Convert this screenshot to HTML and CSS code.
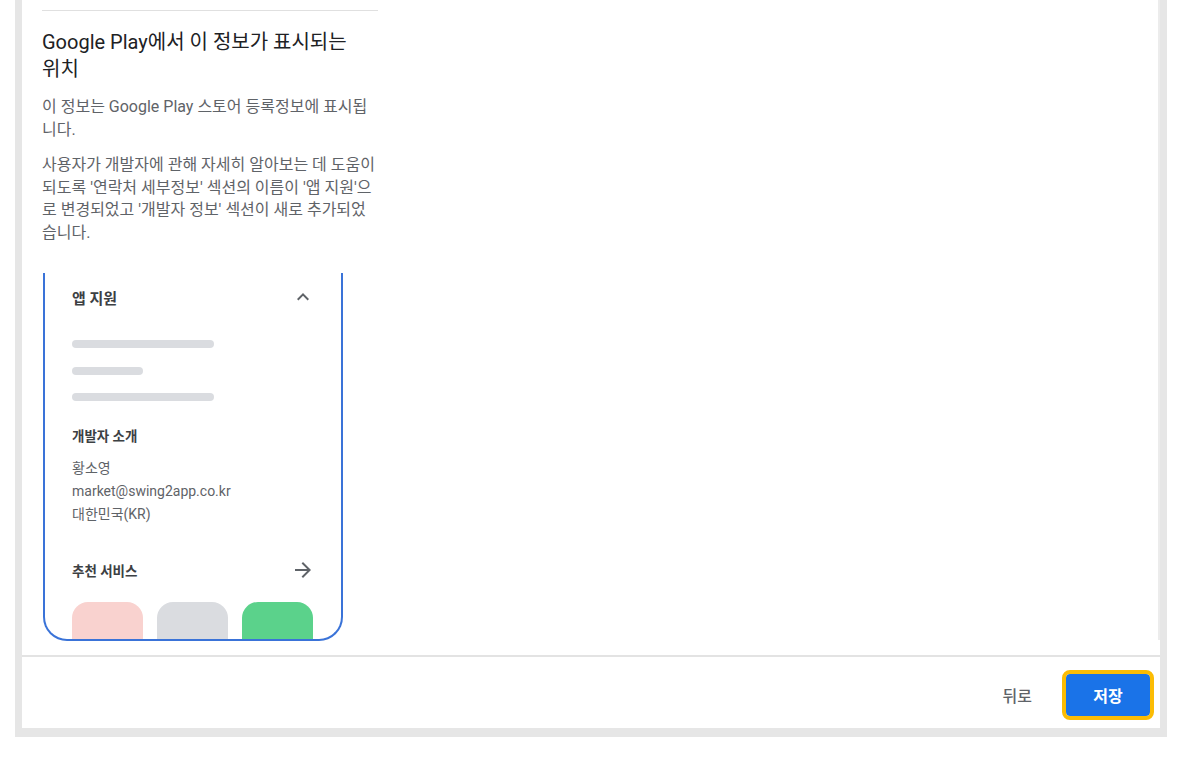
FILE: index.html
```html
<!DOCTYPE html>
<html lang="ko">
<head>
<meta charset="utf-8">
<title>Google Play 정보 표시 위치</title>
<link rel="stylesheet" href="styles.css">
</head>
<body>
<div class="frame">
  <div class="panel">
    <div class="scroll">
      <div class="col">
        <div class="divider"></div>
        <h2 class="title">Google Play에서 이 정보가 표시되는 위치</h2>
        <p class="desc">이 정보는 Google Play 스토어 등록정보에 표시됩니다.</p>
        <p class="desc">사용자가 개발자에 관해 자세히 알아보는 데 도움이 되도록 '연락처 세부정보' 섹션의 이름이 '앱 지원'으로 변경되었고 '개발자 정보' 섹션이 새로 추가되었습니다.</p>
        <div class="phone">
          <div class="row head-row">
            <span class="sec-title">앱 지원</span>
            <svg class="icon" viewBox="0 0 24 24" width="24" height="24"><path d="M12 8l-6 6 1.41 1.41L12 10.83l4.59 4.58L18 14z"/></svg>
          </div>
          <div class="bars">
            <div class="bar long"></div>
            <div class="bar short"></div>
            <div class="bar long"></div>
          </div>
          <div class="dev-title">개발자 소개</div>
          <div class="dev-info">
            <div>황소영</div>
            <div>market@swing2app.co.kr</div>
            <div>대한민국(KR)</div>
          </div>
          <div class="row rec-row">
            <span class="rec-title">추천 서비스</span>
            <svg class="icon arrow" viewBox="0 0 24 24" width="24" height="24"><path d="M12 4l-1.41 1.41L16.17 11H4v2h12.17l-5.58 5.59L12 20l8-8z"/></svg>
          </div>
          <div class="tiles">
            <div class="tile pink"></div>
            <div class="tile grey"></div>
            <div class="tile green"></div>
          </div>
        </div>
      </div>
      <div class="scrollbar"></div>
    </div>
    <div class="footer">
      <button class="btn-back">뒤로</button>
      <button class="btn-save">저장</button>
    </div>
  </div>
</div>
</body>
</html>
```
FILE: styles.css
```css
html, body {
  margin: 0;
  padding: 0;
  background: #ffffff;
}
body {
  font-family: Roboto, "Noto Sans CJK KR", sans-serif;
  color: #202124;
}
.frame {
  margin-left: 15px;
  width: 1152px;
  height: 737px;
  background: #e6e6e6;
  padding: 0 7px 9px 7px;
  box-sizing: border-box;
}
.panel {
  height: 100%;
  background: #ffffff;
  display: flex;
  flex-direction: column;
}
.scroll {
  position: relative;
  height: 657px;
  overflow: hidden;
  padding-left: 20px;
  border-bottom: 2px solid #e3e3e3;
  box-sizing: border-box;
  flex: none;
}
.scrollbar {
  position: absolute;
  right: 0;
  top: 0;
  width: 2px;
  height: 640px;
  background: #ececec;
}
.col {
  width: 336px;
  padding-top: 10px;
}
.divider {
  height: 1px;
  background: #e0e0e0;
}
.title {
  margin: 18px 0 13px;
  font-size: 20px;
  line-height: 27px;
  font-weight: 400;
  word-break: keep-all;
  color: #202124;
}
.desc {
  margin: 0 0 13px;
  font-size: 16px;
  line-height: 22.5px;
  color: #5f6368;
}
.phone {
  margin-top: 29px;
  margin-left: 1px;
  width: 300px;
  height: 368px;
  border: 2px solid #3a73d8;
  border-top: none;
  border-radius: 0 0 24px 24px;
  box-sizing: border-box;
  padding: 0 26px 0 27px;
  overflow: hidden;
}
.row {
  display: flex;
  align-items: center;
  justify-content: space-between;
}
.icon {
  fill: #5f6368;
  flex: none;
}
.head-row {
  height: 24px;
  margin-top: 12px;
}
.sec-title {
  font-size: 15px;
  font-weight: 700;
  color: #3c4043;
}
.bars {
  margin-top: 31px;
  display: flex;
  flex-direction: column;
  gap: 18.5px;
}
.bar {
  height: 8px;
  border-radius: 4px;
  background: #dadce0;
}
.bar.long { width: 142px; }
.bar.short { width: 71px; }
.dev-title {
  margin-top: 27px;
  font-size: 13.5px;
  line-height: 16px;
  font-weight: 700;
  color: #3c4043;
}
.dev-info {
  margin-top: 13px;
  font-size: 14px;
  line-height: 23px;
  color: #5f6368;
}
.rec-row {
  height: 24px;
  margin-top: 32px;
}
.rec-title {
  font-size: 13.5px;
  font-weight: 700;
  color: #3c4043;
}
.tiles {
  margin-top: 20px;
  display: flex;
  gap: 14px;
}
.tile {
  width: 71px;
  height: 60px;
  border-radius: 16px 16px 0 0;
}
.tile.pink { background: #f9d2cf; }
.tile.grey { background: #dadce0; }
.tile.green { background: #5bd28b; }
.footer {
  flex: 1;
  display: flex;
  justify-content: flex-end;
  align-items: flex-start;
  padding: 17px 10px 0 0;
}
.btn-back {
  font-family: Roboto, "Noto Sans CJK KR", sans-serif;
  font-size: 16px;
  font-weight: 500;
  color: #5f6368;
  background: none;
  border: none;
  height: 42px;
  padding: 0 16px;
  margin-right: 18px;
}
.btn-save {
  font-family: Roboto, "Noto Sans CJK KR", sans-serif;
  font-size: 16px;
  font-weight: 700;
  color: #ffffff;
  background: #1a73e8;
  border: none;
  border-radius: 4px;
  width: 84px;
  height: 42px;
  outline: 4px solid #fbbc04;
  outline-offset: 0;
}
```
